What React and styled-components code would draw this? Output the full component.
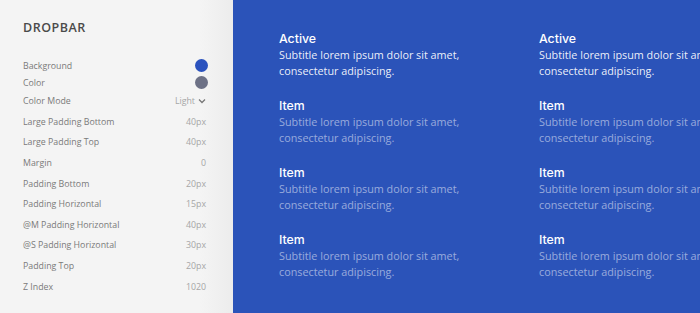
import React from "react";
import styled, { createGlobalStyle } from "styled-components";

const Global = createGlobalStyle`
  html, body { margin: 0; padding: 0; }
  body { font-family: "Open Sans", "Liberation Sans", sans-serif; }
`;

const Page = styled.div`
  display: flex;
  width: 700px;
  height: 313px;
  overflow: hidden;
`;

const Sidebar = styled.aside`
  flex: 0 0 233px;
  box-sizing: border-box;
  padding: 19px 27px 0 23px;
  background: linear-gradient(to right, #f4f4f4 0, #f4f4f4 200px, #ececec 233px);
`;

const Title = styled.h1`
  margin: 0 0 21px;
  font-family: "Open Sans", sans-serif;
  font-weight: 600;
  font-size: 12.5px;
  letter-spacing: 0.5px;
  color: #4a4a4a;
`;

const Row = styled.div`
  display: flex;
  align-items: center;
  justify-content: space-between;
  height: ${p => (p.$compact ? "17px" : "20.6px")};
  font-size: 8.8px;
  color: #7a7a7a;
`;

const Value = styled.span`
  display: flex;
  align-items: center;
  gap: 3px;
  color: #a6a6a6;
`;

const Swatch = styled.span`
  width: 13px;
  height: 13px;
  border-radius: 50%;
  background: ${p => p.$color};
  margin-right: -2px;
`;

const Chevron = () => (
  <svg width="8" height="6" viewBox="0 0 8 6" fill="none">
    <path d="M1 1.5 L4 4.5 L7 1.5" stroke="#777" strokeWidth="1.3" />
  </svg>
);

const Main = styled.main`
  flex: 1;
  background: #2b53b9;
  padding: 31px 0 0 46px;
  overflow: hidden;
`;

const Grid = styled.div`
  display: grid;
  grid-template-columns: repeat(2, 200px);
  column-gap: 60px;
  row-gap: 19px;
`;

const Item = styled.div`
  display: flex;
  flex-direction: column;
`;

const ItemTitle = styled.div`
  font-family: Inter, "Open Sans", sans-serif;
  font-weight: 500;
  font-size: 12.3px;
  line-height: 16px;
  color: #fff;
`;

const ItemText = styled.div`
  font-size: 10.8px;
  line-height: 16px;
  white-space: nowrap;
  color: ${p => (p.$active ? "rgba(255,255,255,0.92)" : "rgba(255,255,255,0.52)")};
`;

const settings = [
  ["Color Mode", "Light", true],
  ["Large Padding Bottom", "40px"],
  ["Large Padding Top", "40px"],
  ["Margin", "0"],
  ["Padding Bottom", "20px"],
  ["Padding Horizontal", "15px"],
  ["@M Padding Horizontal", "40px"],
  ["@S Padding Horizontal", "30px"],
  ["Padding Top", "20px"],
  ["Z Index", "1020"],
];

const items = ["Active", "Item", "Item", "Item"];

export default function App() {
  return (
    <Page>
      <Global />
      <Sidebar>
        <Title>DROPBAR</Title>
        <Row $compact>
          Background
          <Swatch $color="#2a52be" />
        </Row>
        <Row $compact>
          Color
          <Swatch $color="#6d7186" />
        </Row>
        {settings.map(([label, value, chevron]) => (
          <Row key={label}>
            {label}
            <Value>
              {value}
              {chevron && <Chevron />}
            </Value>
          </Row>
        ))}
      </Sidebar>
      <Main>
        <Grid>
          {items.map((title, i) =>
            [0, 1].map(col => (
              <Item key={`${i}-${col}`}>
                <ItemTitle>{title}</ItemTitle>
                <ItemText $active={i === 0}>
                  Subtitle lorem ipsum dolor sit amet,
                  <br />
                  consectetur adipiscing.
                </ItemText>
              </Item>
            ))
          )}
        </Grid>
      </Main>
    </Page>
  );
}
